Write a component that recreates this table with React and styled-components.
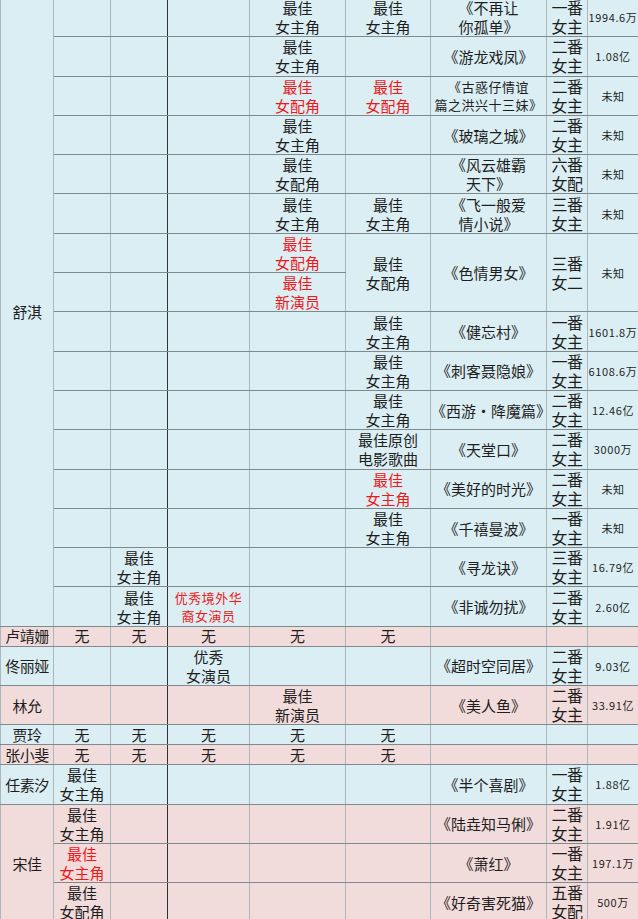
import React from 'react';
import styled, { createGlobalStyle, css } from 'styled-components';

const GlobalStyle = createGlobalStyle`
  html, body {
    margin: 0;
    padding: 0;
    background: #dbeef3;
    overflow: hidden;
  }
`;

const BLUE = '#dbeef3';
const PINK = '#f2dcdb';
const H_LINE = '#7e8a8e';
const V_LINE = '#aab8bc';
const DARK = '#2f3335';

const R = (text) => ({ text, red: true });
const W = ['无', '无', '无', '无', '无'];

const rows = [
  { tone: 'blue', name: { text: '舒淇', rowSpan: 16 }, awards: ['', '', '', '最佳\n女主角', '最佳\n女主角'], film: '《不再让\n你孤单》', role: '一番\n女主', box: '1994.6万' },
  { tone: 'blue', awards: ['', '', '', '最佳\n女主角', ''], film: '《游龙戏凤》', role: '二番\n女主', box: '1.08亿' },
  { tone: 'blue', awards: ['', '', '', R('最佳\n女配角'), R('最佳\n女配角')], film: { text: '《古惑仔情谊\n篇之洪兴十三妹》', small: true }, role: '二番\n女主', box: '未知' },
  { tone: 'blue', awards: ['', '', '', '最佳\n女主角', ''], film: '《玻璃之城》', role: '二番\n女主', box: '未知' },
  { tone: 'blue', awards: ['', '', '', '最佳\n女配角', ''], film: '《风云雄霸\n天下》', role: '六番\n女配', box: '未知' },
  { tone: 'blue', awards: ['', '', '', '最佳\n女主角', '最佳\n女主角'], film: '《飞一般爱\n情小说》', role: '三番\n女主', box: '未知' },
  { tone: 'blue', awards: ['', '', '', R('最佳\n女配角'), { text: '最佳\n女配角', rowSpan: 2 }], film: { text: '《色情男女》', rowSpan: 2 }, role: { text: '三番\n女二', rowSpan: 2 }, box: { text: '未知', rowSpan: 2 } },
  { tone: 'blue', awards: ['', '', '', R('最佳\n新演员'), null], film: null, role: null, box: null },
  { tone: 'blue', awards: ['', '', '', '', '最佳\n女主角'], film: '《健忘村》', role: '一番\n女主', box: '1601.8万' },
  { tone: 'blue', awards: ['', '', '', '', '最佳\n女主角'], film: '《刺客聂隐娘》', role: '一番\n女主', box: '6108.6万' },
  { tone: 'blue', awards: ['', '', '', '', '最佳\n女主角'], film: '《西游・降魔篇》', role: '二番\n女主', box: '12.46亿' },
  { tone: 'blue', awards: ['', '', '', '', '最佳原创\n电影歌曲'], film: '《天堂口》', role: '二番\n女主', box: '3000万' },
  { tone: 'blue', awards: ['', '', '', '', R('最佳\n女主角')], film: '《美好的时光》', role: '二番\n女主', box: '未知' },
  { tone: 'blue', awards: ['', '', '', '', '最佳\n女主角'], film: '《千禧曼波》', role: '一番\n女主', box: '未知' },
  { tone: 'blue', awards: ['', '最佳\n女主角', '', '', ''], film: '《寻龙诀》', role: '三番\n女主', box: '16.79亿' },
  { tone: 'blue', awards: ['', '最佳\n女主角', { text: '优秀境外华\n裔女演员', red: true, small: true }, '', ''], film: '《非诚勿扰》', role: '二番\n女主', box: '2.60亿' },
  { tone: 'pink', short: true, name: '卢靖姗', awards: W, film: '', role: '', box: '' },
  { tone: 'blue', name: '佟丽娅', awards: ['', '', '优秀\n女演员', '', ''], film: '《超时空同居》', role: '二番\n女主', box: '9.03亿' },
  { tone: 'pink', name: '林允', awards: ['', '', '', '最佳\n新演员', ''], film: '《美人鱼》', role: '二番\n女主', box: '33.91亿' },
  { tone: 'blue', short: true, name: '贾玲', awards: W, film: '', role: '', box: '' },
  { tone: 'pink', short: true, name: '张小斐', awards: W, film: '', role: '', box: '' },
  { tone: 'blue', name: '任素汐', awards: ['最佳\n女主角', '', '', '', ''], film: '《半个喜剧》', role: '一番\n女主', box: '1.88亿' },
  { tone: 'pink', name: { text: '宋佳', rowSpan: 3 }, awards: ['最佳\n女主角', '', '', '', ''], film: '《陆垚知马俐》', role: '二番\n女主', box: '1.91亿' },
  { tone: 'pink', awards: [R('最佳\n女主角'), '', '', '', ''], film: '《萧红》', role: '一番\n女主', box: '197.1万' },
  { tone: 'pink', awards: ['最佳\n女配角', '', '', '', ''], film: '《好奇害死猫》', role: '五番\n女配', box: '500万' },
];

const Sheet = styled.table`
  width: 638px;
  margin-top: -3px;
  border-collapse: collapse;
  table-layout: fixed;
  font-family: "Noto Sans CJK SC", "Noto Sans", sans-serif;
  color: #1e1e1e;
`;

const Row = styled.tr`
  background: ${(p) => (p.$tone === 'pink' ? PINK : BLUE)};
  height: ${(p) => (p.$short ? '20px' : '39.3px')};
`;

const kindStyles = {
  name: css`
    font-size: 15px;
    line-height: 19px;
    letter-spacing: -0.5px;
  `,
  award: css`
    font-size: 15px;
    line-height: 19px;
  `,
  film: css`
    font-size: 15px;
    line-height: 19px;
  `,
  role: css`
    font-size: 16px;
    line-height: 19px;
    letter-spacing: -0.5px;
  `,
  box: css`
    font-size: 11px;
    line-height: 14px;
    letter-spacing: 0.6px;
    white-space: nowrap;
  `,
};

const Cell = styled.td`
  padding: 0;
  text-align: center;
  vertical-align: middle;
  white-space: pre-line;
  overflow: visible;
  border-top: 1px solid ${H_LINE};
  border-bottom: 1px solid ${H_LINE};
  border-left: 1px solid ${V_LINE};
  border-right: 1px solid ${(p) => (p.$darkRight ? DARK : V_LINE)};
  ${(p) => kindStyles[p.$kind]}
  ${(p) => p.$red && css`color: #f01818;`}
  ${(p) => p.$small && css`
    font-size: 13px;
    line-height: 18px;
    letter-spacing: 0.5px;
  `}
  ${(p) => p.$short && css`line-height: 18px;`}
`;

const toCell = (value) => {
  if (value === null || value === undefined) return null;
  if (typeof value === 'string') return { text: value };
  return value;
};

const widths = [53, 57, 57, 82, 96, 85, 116, 41, 51];

export default function App() {
  return (
    <>
      <GlobalStyle />
      <Sheet>
        <colgroup>
          {widths.map((w, i) => (
            <col key={i} style={{ width: w }} />
          ))}
        </colgroup>
        <tbody>
          {rows.map((row, ri) => {
            const name = toCell(row.name);
            const cells = [
              ...row.awards.map((a, i) => ({ cell: toCell(a), kind: 'award', col: i + 1 })),
              { cell: toCell(row.film), kind: 'film', col: 6 },
              { cell: toCell(row.role), kind: 'role', col: 7 },
              { cell: toCell(row.box), kind: 'box', col: 8 },
            ];
            return (
              <Row key={ri} $tone={row.tone} $short={row.short}>
                {name && (
                  <Cell $kind="name" $short={row.short} rowSpan={name.rowSpan}>
                    {name.text}
                  </Cell>
                )}
                {cells.map(({ cell, kind, col }) =>
                  cell ? (
                    <Cell
                      key={col}
                      $kind={kind}
                      $red={cell.red}
                      $small={cell.small}
                      $short={row.short}
                      $darkRight={col === 2}
                      rowSpan={cell.rowSpan}
                    >
                      {cell.text}
                    </Cell>
                  ) : null
                )}
              </Row>
            );
          })}
        </tbody>
      </Sheet>
    </>
  );
}
